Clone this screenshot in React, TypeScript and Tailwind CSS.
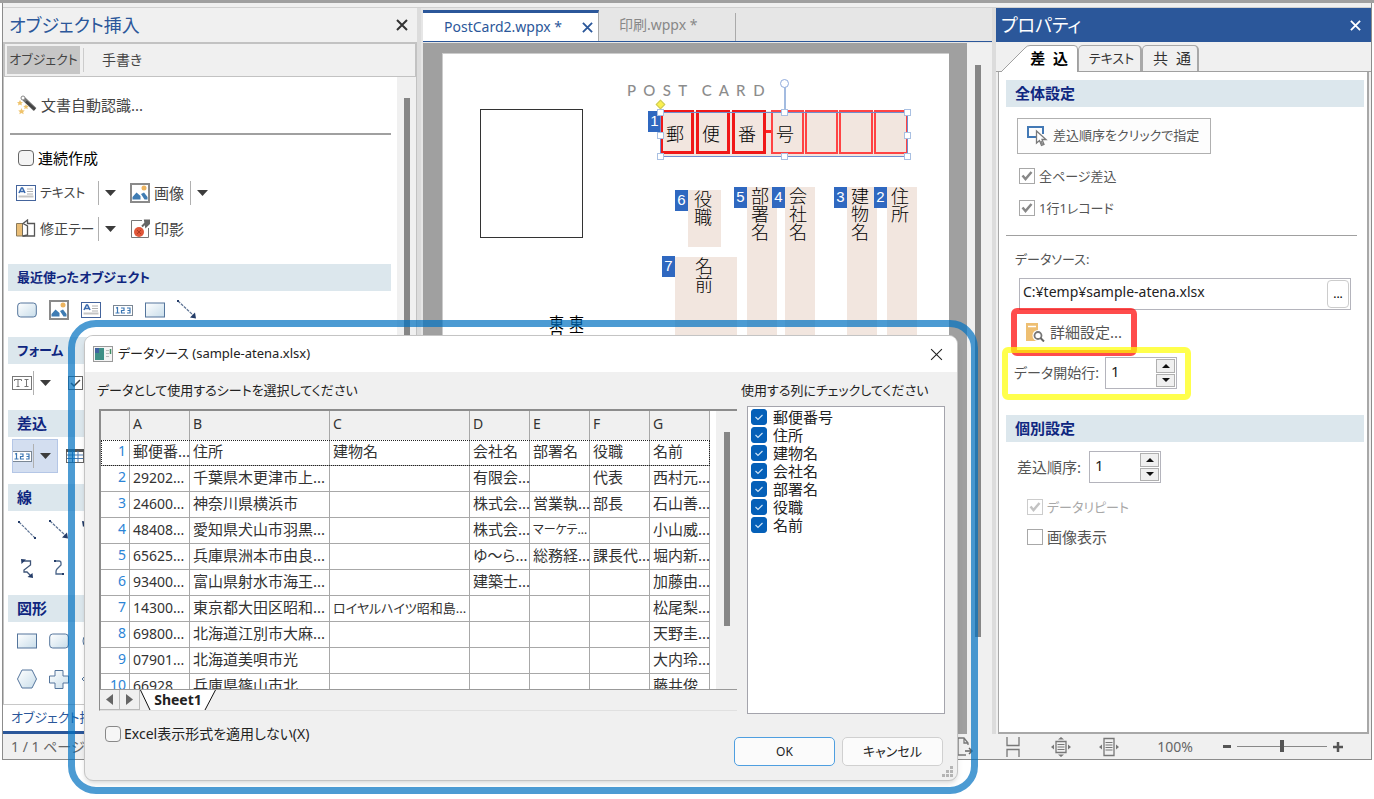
import type { ReactNode } from "react";

/* ---------- data ---------- */

const SHEET_COLUMNS = ["A", "B", "C", "D", "E", "F", "G"];

const SHEET_ROWS = [
  ["郵便番...", "住所", "建物名", "会社名", "部署名", "役職", "名前"],
  ["29202...", "千葉県木更津市上...", "", "有限会...", "", "代表", "西村元..."],
  ["24600...", "神奈川県横浜市", "", "株式会...", "営業執...", "部長", "石山善..."],
  ["48408...", "愛知県犬山市羽黒...", "", "株式会...", "マーケテ...", "", "小山威..."],
  ["65625...", "兵庫県洲本市由良...", "", "ゆ～ら...", "総務経...", "課長代...", "堀内新..."],
  ["93400...", "富山県射水市海王...", "", "建築士...", "", "", "加藤由..."],
  ["14300...", "東京都大田区昭和...", "ロイヤルハイツ昭和島...", "", "", "", "松尾梨..."],
  ["69800...", "北海道江別市大麻...", "", "", "", "", "天野圭..."],
  ["07901...", "北海道美唄市光", "", "", "", "", "大内玲..."],
  ["66928", "兵庫県篠山市北", "", "", "", "", "藤井俊"],
];

const USED_COLUMNS = ["郵便番号", "住所", "建物名", "会社名", "部署名", "役職", "名前"];

const POSTAL_BOXES = [
  { char: "郵", box: "left-[217px] w-[34px] border-[3px] border-[#f01818]" },
  { char: "便", box: "left-[253px] w-[34px] border-[3px] border-[#f01818]" },
  { char: "番", box: "left-[289px] w-[34px] border-[3px] border-[#f01818]" },
  { char: "号", box: "left-[328px] w-[33px] border-2 border-[#f44]" },
  { char: "", box: "left-[362px] w-[33px] border-2 border-[#f44]" },
  { char: "", box: "left-[396px] w-[34px] border-2 border-[#f44]" },
  { char: "", box: "left-[431px] w-[34px] border-2 border-[#f44]" },
];

// badge = number tag at the left of each merge field on the card
const MERGE_FIELDS = [
  { no: 6, text: "役職", badge: "left-[232px] top-[136px]", field: "left-[245px] top-[136px] w-[33px] h-[57px] pl-[5px]" },
  { no: 7, text: "名前", badge: "left-[219px] top-[202px]", field: "left-[232px] top-[203px] w-[62px] h-[300px] pl-[19px]" },
  { no: 5, text: "部署名", badge: "left-[291px] top-[133px]", field: "left-[304px] top-[133px] w-[30px] h-[380px] pl-[3px]" },
  { no: 4, text: "会社名", badge: "left-[329px] top-[133px]", field: "left-[342px] top-[133px] w-[30px] h-[380px] pl-[3px]" },
  { no: 3, text: "建物名", badge: "left-[391px] top-[133px]", field: "left-[404px] top-[133px] w-[30px] h-[380px] pl-[3px]" },
  { no: 2, text: "住所", badge: "left-[431px] top-[133px]", field: "left-[444px] top-[133px] w-[30px] h-[380px] pl-[3px]" },
];

const HANDLES = [
  "-left-1 -top-1",
  "left-[120px] -top-1",
  "-right-1 -top-1",
  "-left-1 top-[19px]",
  "-right-1 top-[19px]",
  "-left-1 -bottom-1",
  "left-[120px] -bottom-1",
  "-right-1 -bottom-1",
];

/* ---------- icons ---------- */

function Svg({ children, w = 20, h = 20 }: { children: ReactNode; w?: number; h?: number }) {
  return (
    <svg width={w} height={h} viewBox={`0 0 ${w} ${h}`} fill="none" className="shrink-0">
      <defs>
        <linearGradient id="shape" x1="0" y1="0" x2="1" y2="1">
          <stop offset="0" stopColor="#fff" />
          <stop offset="1" stopColor="#c8ddea" />
        </linearGradient>
      </defs>
      {children}
    </svg>
  );
}

function CloseIcon({ size = 12, width = 2 }: { size?: number; width?: number }) {
  return (
    <svg width={size} height={size} viewBox="0 0 12 12" stroke="currentColor" strokeWidth={width}>
      <path d="M1 1L11 11M11 1L1 11" />
    </svg>
  );
}

const WandIcon = () => (
  <Svg>
    <path d="M7 4L18 14.500" stroke="#777" strokeWidth="4" />
    <path d="M9 6.500L18 14.500" stroke="#444" strokeWidth="2.500" />
    <circle cx="6" cy="3" r="2" fill="#fff" stroke="#888" />
    <path d="M3 5l1 2 2 .2-1.600 1.400.5 2L3 9.500l-2 1.100.5-2L0 7.200 2 7z" fill="#efc36c" />
    <path d="M9 9l.8 1.800 2 .2-1.500 1.300.4 2L9 13.300l-1.800 1 .5-2L6.200 11l2-.2z" fill="#efc36c" />
    <path d="M4.500 13l1 2.200 2.300.2-1.700 1.500.6 2.300-2.200-1.300-2.200 1.300.6-2.300-1.700-1.500 2.300-.2z" fill="#efc36c" />
  </Svg>
);

const TextIcon = () => (
  <Svg>
    <rect x=".5" y="2.500" width="19" height="15" fill="#fff" stroke="#44649c" />
    <path d="M3 10L5.500 5h1L9 10M4 8.500h4" stroke="#3c6cb0" strokeWidth="1.600" />
    <path d="M11 6h6M11 8.500h6M11 11h6" stroke="#b0b0b0" />
    <path d="M2.500 13.500h15" stroke="#c4c4c4" strokeWidth="2" />
  </Svg>
);

const PictureIcon = () => (
  <Svg>
    <rect x="1" y="1" width="18" height="18" fill="#fff" stroke="#8a8a8a" strokeWidth="2" />
    <circle cx="14" cy="5" r="2.500" fill="#edb45f" />
    <path d="M2.500 16.500V14l4-4.500 4 3.500v3.500zM11 11l3-1.500 3.500 4.500v2.500h-3z" fill="#3f7cb3" />
  </Svg>
);

const TapeIcon = () => (
  <Svg>
    <path d="M.5 4.500H7V17H.5z" fill="#e9bd76" stroke="#8a7a5c" />
    <path d="M7 17V4.500l4.500-3.500V4.500h7V17z" fill="#fff" stroke="#555" strokeWidth="1.300" />
    <path d="M7 4.500l4.500 2.500v9l-4.500 1" fill="#fff" stroke="#555" strokeWidth="1.300" />
  </Svg>
);

const StampIcon = () => (
  <Svg>
    <path d="M12 1.500H1.500v17h17V9" stroke="#777" />
    <circle cx="9" cy="13" r="5" fill="#e0573a" />
    <path d="M7 11l4 4M11 11l-4 4" stroke="#b23a20" />
    <path d="M12 7.500l4-4M15 1.500h4v3l-3 3z" stroke="#666" strokeWidth="2" fill="#666" />
  </Svg>
);

const RoundedShape = () => (
  <Svg>
    <rect x=".7" y="3" width="18.600" height="14" rx="3" fill="url(#shape)" stroke="#54759c" />
  </Svg>
);

const RectShape = () => (
  <Svg>
    <rect x=".5" y="3" width="19" height="14" fill="url(#shape)" stroke="#54759c" />
  </Svg>
);

const NumberIcon = () => (
  <Svg>
    <rect x=".5" y="5.500" width="19" height="10" fill="#fff" stroke="#7b8794" />
    <path d="M3 8l1.500-.5v5M2.500 13h4M8 8h3v2.500H8.500V13H12M14 8h3v5h-3M14.500 10.500H17" stroke="#3b76b3" strokeWidth="1.200" />
  </Svg>
);

const ArrowLine = () => (
  <Svg>
    <path d="M1 1L16 15" stroke="#5d7394" strokeWidth="1.200" strokeDasharray="3 1" />
    <path d="M19 18.500l-6-1 5-5z" fill="#243c68" />
    <rect x="0" y="0" width="2" height="2" fill="#243c68" />
  </Svg>
);

const PlainLine = () => (
  <Svg>
    <path d="M2 2L18 18" stroke="#5d7394" strokeWidth="1.200" strokeDasharray="3 1" />
    <path d="M1 1h2v2H1zM17 17h2v2h-2z" fill="#243c68" />
  </Svg>
);

const DoubleArrowLine = () => (
  <Svg>
    <path d="M4 4L16 16" stroke="#5d7394" strokeWidth="1.200" />
    <path d="M1 1l6 1-5 5zM19 19l-6-1 5-5z" fill="#243c68" />
  </Svg>
);

const CurveArrows = () => (
  <Svg>
    <path d="M6 3H13.500V7L7 12V14H10L14 18" stroke="#3f5578" strokeWidth="1.300" />
    <path d="M4 1l5 .5L4.500 6zM16 20l-5.500-1L15.500 15z" fill="#243c68" />
  </Svg>
);

const Curve = () => (
  <Svg>
    <path d="M6 3h4q2 0 2 2v2l-4 4q-1 1-1 3v2h7" stroke="#4a6488" strokeWidth="1.300" />
    <path d="M5 2h2v2H5zM13 15h2v2h-2z" fill="#243c68" />
  </Svg>
);

const CircleShape = () => (
  <Svg>
    <circle cx="10" cy="10" r="8" fill="url(#shape)" stroke="#54759c" />
  </Svg>
);

const HexShape = () => (
  <Svg>
    <path d="M5 1h10l4.500 9L15 19H5L.5 10z" fill="url(#shape)" stroke="#54759c" />
  </Svg>
);

const CrossShape = () => (
  <Svg>
    <path d="M6 1.500h8V7h5.500v7H14v5.500H6V14H.5V7H6z" fill="url(#shape)" stroke="#54759c" />
  </Svg>
);

const DiamondShape = () => (
  <Svg>
    <path d="M10 1l9 9-9 9-9-9z" fill="url(#shape)" stroke="#54759c" />
  </Svg>
);

const TextFieldIcon = () => (
  <Svg>
    <rect x=".5" y="3.500" width="19" height="13" fill="#fff" stroke="#777" />
    <path d="M2.500 8V6.500h7V8M6 6.500V13M4.500 13.500h3M12.500 6.500h4M14.500 6.500V13M12.500 13.500h4" stroke="#777" />
  </Svg>
);

const CheckFieldIcon = () => (
  <Svg>
    <rect x="1.500" y="3.500" width="14" height="13" fill="#fff" stroke="#666" />
    <path d="M4 10l3 3 6-6" stroke="#444" strokeWidth="1.500" />
  </Svg>
);

const TableIcon = () => (
  <Svg>
    <rect x=".5" y="3.500" width="17" height="13" fill="#fff" stroke="#666" />
    <path d="M0 4.500h18" stroke="#555" strokeWidth="3" />
    <path d="M1 9h16M1 12.500h16M6.500 5v11M12 5v11" stroke="#4c7bb0" />
  </Svg>
);

const ClickOrderIcon = () => (
  <Svg w={22} h={22}>
    <path d="M10 12H2V2h15v7" stroke="#4379b5" strokeWidth="2" />
    <path d="M10.500 6v12l3-2.500 2 5 2.500-1-2-5h4z" fill="#fff" stroke="#7a7a7a" strokeWidth="1.300" />
    <path d="M15 16l1.500 4" stroke="#888" strokeWidth="2" />
  </Svg>
);

const DetailIcon = () => (
  <Svg>
    <path d="M1 1h12v18H1z" fill="#eebf72" />
    <path d="M3 4.500h8" stroke="#fff" strokeWidth="1.500" />
    <circle cx="13" cy="13.500" r="5.500" fill="#fff" />
    <circle cx="13" cy="13.500" r="3.500" stroke="#777" strokeWidth="1.800" />
    <path d="M15.500 16l3.500 3.500" stroke="#666" strokeWidth="2" />
  </Svg>
);

const Down = () => (
  <svg width="11" height="6" viewBox="0 0 11 6" className="shrink-0">
    <path d="M0 0h11L5.500 6z" fill="#3c3c3c" />
  </svg>
);

/* ---------- small controls ---------- */

function SectionTitle({ children, kana = false }: { children: ReactNode; kana?: boolean }) {
  return (
    <h3 className="flex h-[27px] items-center bg-[#dce7ed] pl-[9px] text-[15px] font-bold text-[#0f2680]">
      <span className={kana ? "text-[13px]" : undefined}>{children}</span>
    </h3>
  );
}

function SplitButton({ icon, label, small = false }: { icon: ReactNode; label: string; small?: boolean }) {
  return (
    <div className="flex h-9 w-[114px] items-center">
      <button type="button" className="flex w-[82px] items-center gap-1 whitespace-nowrap">
        {icon}
        <span className={small ? "text-[13px]" : "text-sm"}>{label}</span>
      </button>
      <span className="mr-[6px] h-6 w-px shrink-0 bg-[#b0b0b0]" />
      <button type="button" aria-label={`${label} メニュー`}>
        <Down />
      </button>
    </div>
  );
}

function GreyCheck({ label, checked = false, disabled = false }: { label: string; checked?: boolean; disabled?: boolean }) {
  return (
    <label className={disabled ? "flex items-center gap-1 text-[#a8a8a8]" : "flex items-center gap-1 text-[#555]"}>
      <span className="relative flex size-4">
        <input
          type="checkbox"
          defaultChecked={checked}
          disabled={disabled}
          className="peer size-4 appearance-none border border-[#a8a8a8] bg-white disabled:border-[#ccc]"
        />
        <svg
          viewBox="0 0 16 16"
          className="pointer-events-none absolute inset-0 hidden peer-checked:block peer-disabled:opacity-50"
        >
          <path d="M3.500 7.500l3 3.500L12.500 4" fill="none" stroke="#888" strokeWidth="2.500" />
        </svg>
      </span>
      {label}
    </label>
  );
}

function BlueCheck({ label }: { label: string }) {
  return (
    <label className="flex h-[18px] items-center gap-[6px] text-[15px] text-[#222]">
      <span className="relative flex size-4">
        <input type="checkbox" defaultChecked className="peer size-4 appearance-none rounded-[3px] border border-[#888] bg-white checked:border-[#0560b8] checked:bg-[#0560b8]" />
        <svg viewBox="0 0 16 16" className="pointer-events-none absolute inset-0 hidden peer-checked:block">
          <path d="M4.500 8l2.500 2.500 4.500-4.500" fill="none" stroke="#cfe4f7" strokeWidth="1.200" />
        </svg>
      </span>
      {label}
    </label>
  );
}

function Spin({ id }: { id: string }) {
  return (
    <div className="flex h-8 w-[72px] border border-[#b4b4bc] bg-white p-px">
      <input id={id} type="text" inputMode="numeric" defaultValue="1" className="h-6 min-w-0 flex-1 pl-1 text-[15px] text-[#222] outline-none" />
      <div className="flex w-[19px] flex-col gap-px">
        <button type="button" aria-label="増やす" className="flex flex-1 items-center justify-center border border-[#b0b0b0] bg-[#f0f0f0]">
          <svg width="8" height="4" viewBox="0 0 8 4"><path d="M0 4h8L4 0z" fill="#111" /></svg>
        </button>
        <button type="button" aria-label="減らす" className="flex flex-1 items-center justify-center border border-[#b0b0b0] bg-[#f0f0f0]">
          <svg width="8" height="4" viewBox="0 0 8 4"><path d="M0 0h8L4 4z" fill="#111" /></svg>
        </button>
      </div>
    </div>
  );
}

/* ---------- left: object panel ---------- */

function ObjectPanel() {
  return (
    <section className="flex w-[414px] shrink-0 flex-col bg-[#f0f0f0]">
      <header className="flex h-[34px] items-center justify-between pl-[6px] pr-[9px]">
        <h2 className="text-lg text-[#2b579a]">オブジェクト挿入</h2>
        <button type="button" aria-label="閉じる" className="text-[#333]">
          <CloseIcon />
        </button>
      </header>
      <nav className="flex h-[35px] items-center border-2 border-b border-[#c2c2c2] pl-[2px] text-[#444]">
        <button type="button" className="h-7 w-[73px] bg-[#c6c6c6] text-center text-[13px]">オブジェクト</button>
        <span className="ml-[3px] h-6 w-px bg-[#ccc]" />
        <button type="button" className="ml-[18px] text-sm">手書き</button>
      </nav>
      <div className="flex min-h-0 flex-1 border-x border-[#c2c2c2]">
        <div className="min-w-0 flex-1 overflow-hidden bg-white pl-1 pr-[6px] text-[#444]">
          <button type="button" className="flex h-14 items-center gap-1 pl-[9px]">
            <WandIcon />
            文書自動認識...
          </button>
          <hr className="ml-[2px] border-0 border-t-2 border-[#a0a0a0]" />
          <label className="flex h-10 items-center gap-1 pt-[6px] pl-[10px] text-black">
            <input type="checkbox" className="size-4 appearance-none rounded-[4px] border border-[#666] bg-[#f4f4f4]" />
            連続作成
          </label>
          <div className="flex pl-[8px]">
            <SplitButton icon={<TextIcon />} label="テキスト" small />
            <div className="flex items-center">
              <button type="button" className="flex items-center gap-1">
                <PictureIcon />
                画像
              </button>
              <span className="mx-[6px] h-6 w-px bg-[#b0b0b0]" />
              <button type="button" aria-label="画像 メニュー"><Down /></button>
            </div>
          </div>
          <div className="mb-[17px] flex pl-[8px]">
            <SplitButton icon={<TapeIcon />} label="修正テー" />
            <button type="button" className="flex items-center gap-1">
              <StampIcon />
              印影
            </button>
          </div>

          <SectionTitle kana>最近使ったオブジェクト</SectionTitle>
          <div className="mb-2 flex h-[38px] items-center gap-3 pl-[9px]">
            <RoundedShape />
            <PictureIcon />
            <TextIcon />
            <NumberIcon />
            <RectShape />
            <ArrowLine />
          </div>

          <SectionTitle kana>フォーム</SectionTitle>
          <div className="mb-2 flex h-[38px] items-center pl-1">
            <TextFieldIcon />
            <span className="mr-[6px] ml-px h-6 w-px bg-[#b0b0b0]" />
            <Down />
            <span className="w-4" />
            <CheckFieldIcon />
          </div>

          <SectionTitle>差込</SectionTitle>
          <div className="mb-[9px] flex h-[38px] items-center pl-1">
            <div className="flex h-[34px] w-[46px] items-center bg-[#d3def0] outline outline-1 -outline-offset-1 outline-[#b4c6e6]">
              <NumberIcon />
              <span className="mr-[6px] ml-px h-6 w-px bg-[#b0b0b0]" />
              <Down />
            </div>
            <span className="w-2" />
            <TableIcon />
          </div>

          <SectionTitle>線</SectionTitle>
          <div className="mb-2 grid grid-cols-[repeat(11,32px)] pl-[9px]">
            <span className="flex h-[38px] items-center"><PlainLine /></span>
            <span className="flex items-center"><ArrowLine /></span>
            <span className="col-span-9 flex items-center"><DoubleArrowLine /></span>
            <span className="flex h-[38px] items-center"><CurveArrows /></span>
            <span className="flex items-center"><Curve /></span>
            <span className="col-span-9 flex items-center"><CurveArrows /></span>
          </div>

          <SectionTitle>図形</SectionTitle>
          <div className="grid grid-cols-[repeat(11,32px)] pl-[9px]">
            <span className="flex h-[38px] items-center"><RectShape /></span>
            <span className="flex items-center"><RoundedShape /></span>
            <span className="col-span-9 flex items-center"><CircleShape /></span>
            <span className="flex h-[38px] items-center"><HexShape /></span>
            <span className="flex items-center"><CrossShape /></span>
            <span className="col-span-9 flex items-center"><DiamondShape /></span>
          </div>
        </div>
        <div className="w-[19px] bg-[#f0f0f0] pt-[21px]">
          <div className="ml-[7px] h-[600px] w-[6px] bg-[#868686]" />
        </div>
      </div>
      <footer className="flex h-[30px] items-center border-t border-b-[3px] border-t-[#c8c8c8] border-b-[#2b579a] bg-white pl-2">
        <button type="button" className="text-[13px] text-[#2b579a]">オブジェクト挿入</button>
      </footer>
    </section>
  );
}

/* ---------- center: document ---------- */

function PostCard() {
  return (
    <div className="relative mr-[18px] ml-[19px] min-w-0 flex-1 overflow-hidden border-t border-l border-[#ccc] bg-white">
      <div className="absolute top-[55px] left-[37px] h-[129px] w-[103px] border border-[#333]" />
      <p className="absolute top-[24px] left-[184px] font-['Lato'] text-[15px] leading-6 font-medium whitespace-pre text-[#8c8c8c]">
        {"P  O  S  T    C  A  R  D"}
      </p>

      {MERGE_FIELDS.map((f) => (
        <div key={f.no}>
          <div className={`absolute bg-[#f2e6df] text-lg text-black ${f.field}`}>
            <span className="block leading-[18px] font-light [writing-mode:vertical-rl]">{f.text}</span>
          </div>
          <span className={`absolute flex h-[21px] w-[13px] items-center justify-center bg-[#2f68c0] font-['Liberation_Sans'] text-[15px] text-white ${f.badge}`}>
            {f.no}
          </span>
        </div>
      ))}

      <div className="absolute top-[57px] left-[217px] h-[46px] w-[248px] bg-[#f2e6df]" />
      <span className="absolute top-[76px] left-[322px] h-[3px] w-[8px] bg-[#f22]" />
      {POSTAL_BOXES.map((b, i) => (
        <span key={i} className={`absolute top-[56px] flex h-[44px] items-center pt-1 pl-[3px] text-lg leading-5 font-light text-black ${b.box}`}>
          {b.char}
        </span>
      ))}
      <span className="absolute top-[57px] left-[205px] flex h-[21px] w-[13px] items-center justify-center bg-[#2f68c0] font-['Liberation_Sans'] text-[15px] text-white">
        1
      </span>

      <div className="absolute top-[58px] left-[217px] h-[45px] w-[248px] border border-[#6f8fd0]">
        <span className="absolute -top-[28px] left-[123px] h-[28px] w-[2px] bg-[#a3bbe0]" />
        <span className="absolute -top-[34px] left-[119px] size-[9px] rounded-full border border-[#8faadc] bg-white" />
        <span className="absolute -top-[12px] -left-[4px] size-[7px] rotate-45 border border-[#c9c95a] bg-[#fbf04e]" />
        {HANDLES.map((pos) => (
          <span key={pos} className={`absolute size-[7px] border border-[#a9c0e2] bg-white ${pos}`} />
        ))}
      </div>

      <p className="absolute top-[261px] left-[103px] text-[15px] leading-5 text-black [writing-mode:vertical-rl]">
        東京
        <br />
        東日
      </p>
    </div>
  );
}

function DocumentArea() {
  return (
    <section className="flex min-w-0 flex-1 flex-col border-x-4 border-[#dcdcdc] bg-[#e6e6e6] pl-[2px]">
      <nav className="flex h-[34px] items-end border-b border-[#2b579a] pt-[2px] text-sm">
        <div className="flex h-[31px] w-[176px] items-center justify-between border-t-[3px] border-r border-t-[#2b579a] border-r-[#aaa] bg-white pr-[5px] pl-[21px] text-[#2b579a]">
          <button type="button">PostCard2.wppx *</button>
          <button type="button" aria-label="PostCard2を閉じる"><CloseIcon size={11} /></button>
        </div>
        <button type="button" className="h-7 w-[137px] border-r border-[#aaa] pb-1 pl-5 text-left text-[#888]">印刷.wppx *</button>
      </nav>
      <div className="mt-px flex min-h-0 flex-1 bg-[#a0a0a0]">
        <div className="flex min-w-0 flex-1 pt-[10px]">
          <PostCard />
        </div>
        <div className="w-[25px] bg-[#f0f0f0] pt-[22px]">
          <div className="ml-2 h-[572px] w-[6px] bg-[#868686]" />
        </div>
      </div>
    </section>
  );
}

/* ---------- right: properties ---------- */

function PropertyPanel() {
  return (
    <section className="flex w-[375px] shrink-0 flex-col bg-[#f0f0f0]">
      <header className="flex h-[34px] items-center justify-between bg-[#2b579a] pr-[10px] pl-[5px] text-white">
        <h2 className="text-lg">プロパティ</h2>
        <button type="button" aria-label="閉じる">
          <CloseIcon size={11} />
        </button>
      </header>
      <div role="tablist" className="flex h-[30px] items-end border-b border-[#a0a0a0] pl-[5px]">
        <button type="button" role="tab" className="relative -mb-px flex h-[27px] w-[77px] items-center justify-end pr-[10px] text-[15px] font-bold text-black">
          <svg viewBox="0 0 77 27" className="absolute inset-0">
            <path d="M0 27L24 3Q26 .5 29 .5H73Q76.500 .5 76.500 4V27" fill="#fff" stroke="#a0a0a0" />
          </svg>
          <span className="relative">差&nbsp; 込</span>
        </button>
        <button type="button" role="tab" className="h-[26px] w-[64px] rounded-t-[5px] border border-r-2 border-b-0 border-[#a8a8a8] pl-1 text-center text-[13px] text-[#333]">
          テキスト
        </button>
        <button type="button" role="tab" className="h-[26px] w-[57px] rounded-t-[5px] border border-r-2 border-b-0 border-[#a8a8a8] pl-1 text-center text-[15px] text-[#333]">
          共&nbsp; 通
        </button>
      </div>
      <div className="mx-[2px] flex-1 border-r-2 border-b-2 border-l border-[#a8a8a8] bg-white pt-2 pr-[3px] pl-[7px] text-[#555]">
        <SectionTitle>全体設定</SectionTitle>
        <div className="mr-[7px] border-b border-[#a0a0a0] pt-[11px] pb-[19px] pl-[11px]">
          <button type="button" className="flex h-9 w-[194px] items-center gap-[5px] border border-[#b0b0b0] bg-[#fdfdfd] pl-2 text-[13px] whitespace-nowrap">
            <ClickOrderIcon />
            差込順序をクリックで指定
          </button>
          <div className="mt-[14px] flex flex-col gap-4 pl-[2px] text-[13px] leading-4">
            <GreyCheck label="全ページ差込" checked />
            <GreyCheck label="1行1レコード" checked />
          </div>
        </div>

        <label htmlFor="source" className="mt-[13px] block pl-[9px] text-[13px] leading-5">データソース:</label>
        <div className="mt-[9px] mr-[13px] ml-[13px] flex h-8 items-center border border-[#b4b4bc] bg-white pr-px">
          <input id="source" type="text" defaultValue="C:¥temp¥sample-atena.xlsx" className="min-w-0 flex-1 pb-1 pl-[3px] text-sm text-[#222] outline-none" />
          <button type="button" aria-label="参照" className="h-7 w-[22px] rounded border border-[#ccc] text-xs text-black">...</button>
        </div>
        <div className="relative mt-1 ml-[19px] w-[104px]">
          <button type="button" className="flex h-9 items-center gap-[5px]">
            <DetailIcon />
            詳細設定...
          </button>
          <span className="pointer-events-none absolute -top-[6px] -left-[14px] h-[48px] w-[126px] rounded-md border-[6px] border-[#ff0000]/70" />
        </div>
        <div className="relative mt-[7px] flex items-center gap-[6px] pl-[8px] text-sm">
          <label htmlFor="start-row" className="w-[85px] whitespace-nowrap">データ開始行:</label>
          <Spin id="start-row" />
          <span className="pointer-events-none absolute -top-[10px] -left-[4px] h-[53px] w-[189px] rounded-md border-[6px] border-[#ffff00]/70" />
        </div>

        <div className="mt-[26px]">
          <SectionTitle>個別設定</SectionTitle>
        </div>
        <div className="mt-[9px] flex items-center gap-2 pl-[11px] text-[15px]">
          <label htmlFor="order">差込順序:</label>
          <Spin id="order" />
        </div>
        <div className="mt-[16px] flex flex-col gap-[14px] pl-[21px] leading-4">
          <div className="text-[13px]">
            <GreyCheck label="データリピート" checked disabled />
          </div>
          <GreyCheck label="画像表示" />
        </div>
      </div>
    </section>
  );
}

/* ---------- status bar ---------- */

function StatusBar() {
  return (
    <footer className="flex h-[25px] items-center justify-between bg-[#f0f0f0] pr-[28px] pl-2 text-sm text-[#666]">
      <span>1 / 1 ページ</span>
      <div className="flex items-center">
        <Svg w={18} h={20}>
          <path d="M12 8V6L8 1H2v17h8M8 1v5h4" stroke="#777" strokeWidth="1.300" />
          <path d="M9 14h7M13 11l3 3-3 3" stroke="#666" strokeWidth="1.500" />
        </Svg>
        <span className="w-[30px]" />
        <Svg w={18} h={20}>
          <path d="M3 0v8.500h12V0M3 20v-7.500h12V20" stroke="#777" strokeWidth="1.300" />
        </Svg>
        <span className="w-[29px]" />
        <Svg w={20} h={20}>
          <path d="M5 4.500h10v11H5z" stroke="#777" strokeWidth="1.300" />
          <path d="M6.500 7.500h7M6.500 10h7M6.500 12.500h7" stroke="#777" />
          <path d="M10 0l3 2.500H7zM10 20l3-2.500H7zM0 10l3-2.500v5zM20 10l-3-2.500v5z" fill="#777" />
        </Svg>
        <span className="w-7" />
        <Svg w={20} h={20}>
          <path d="M5 1.500h10v17H5z" stroke="#777" strokeWidth="1.300" />
          <path d="M6.500 5.500h7M6.500 8h7M6.500 10.500h7M6.500 13h7" stroke="#777" />
          <path d="M0 10l3-2.500v5zM20 10l-3-2.500v5z" fill="#777" />
        </Svg>
        <span className="w-[74px] text-right">100%</span>
        <button type="button" aria-label="縮小" className="ml-[30px] h-[3px] w-2 bg-[#555]" />
        <input
          type="range"
          aria-label="ズーム"
          className="mx-[6px] h-3 w-[90px] appearance-none bg-transparent [&::-webkit-slider-runnable-track]:h-px [&::-webkit-slider-runnable-track]:bg-[#888] [&::-webkit-slider-thumb]:-mt-[6px] [&::-webkit-slider-thumb]:h-3 [&::-webkit-slider-thumb]:w-1 [&::-webkit-slider-thumb]:appearance-none [&::-webkit-slider-thumb]:bg-[#555]"
        />
        <button type="button" aria-label="拡大">
          <svg width="10" height="10" viewBox="0 0 10 10" stroke="#555" strokeWidth="2.500">
            <path d="M5 0v10M0 5h10" />
          </svg>
        </button>
      </div>
    </footer>
  );
}

/* ---------- data source dialog ---------- */

function cellSize(text: string) {
  if (/^\d/.test(text)) return "text-sm leading-5";
  if (/^[ァ-ヶー]{5}/.test(text)) return "text-[13px] leading-5";
  if (/^[ァ-ヶー]{3}/.test(text)) return "text-xs leading-5";
  return undefined;
}

function SheetTable() {
  return (
    <div className="flex h-[281px] overflow-hidden border-t-2 border-l-2 border-b border-t-[#8c8c8c] border-l-[#8c8c8c] border-b-[#999] bg-white">
      <table className="h-fit w-[609px] shrink-0 table-fixed border-separate border-spacing-0 text-[15px] leading-5 text-[#333]">
        <colgroup>
          <col className="w-[29px]" />
          <col className="w-[60px]" />
          <col className="w-[140px]" />
          <col className="w-[140px]" />
          <col className="w-[60px]" />
          <col className="w-[60px]" />
          <col className="w-[60px]" />
          <col className="w-[60px]" />
        </colgroup>
        <thead>
          <tr className="h-[29px] bg-[#f0f0f0]">
            <th className="border-r border-[#a8a8a8]" />
            {SHEET_COLUMNS.map((c) => (
              <th key={c} className="border-r border-[#a8a8a8] pb-[3px] pl-[3px] text-left text-sm font-normal">{c}</th>
            ))}
          </tr>
        </thead>
        <tbody>
          {SHEET_ROWS.map((row, r) => (
            <tr key={r} className="h-[26px] first:outline-1 first:-outline-offset-1 first:outline-dotted first:outline-[#222]">
              <td className="border-r border-b border-[#a8a8a8] pr-[3px] pb-[3px] text-right text-sm text-[#2b84d6]">{r + 1}</td>
              {row.map((cell, c) => (
                <td key={c} className="border-r border-b border-[#a8a8a8] pb-[3px] pl-[3px] whitespace-nowrap">
                  <span className={cellSize(cell)}>{cell}</span>
                </td>
              ))}
            </tr>
          ))}
        </tbody>
      </table>
      <div className="flex flex-1 bg-white">
        <div className="ml-[6px] flex-1 bg-[#f0f0f0] pt-[21px]">
          <div className="ml-2 h-[194px] w-[6px] bg-[#868686]" />
        </div>
      </div>
    </div>
  );
}

function DataSourceDialog() {
  return (
    <div role="dialog" aria-labelledby="dialog-title" className="absolute top-[335px] left-[84px] flex h-[446px] w-[874px] flex-col overflow-hidden rounded-[9px] border border-[#c4c4c4] bg-[#f0f0f0] text-[#222] shadow-md">
      <header className="flex h-9 shrink-0 items-center bg-white pr-[14px] pl-2">
        <Svg w={20} h={16}>
          <rect x=".5" y=".5" width="19" height="15" fill="#f4f4f4" stroke="#999" />
          <rect x="2" y="2" width="9" height="12" fill="#3e8f86" />
          <path d="M2 2h4v5H2z" fill="#3f62a0" />
          <path d="M13 4.500h3M13 7.500h3M13 10.500h3" stroke="#bbb" />
          <path d="M17.500 3v5" stroke="#3d8c62" strokeWidth="1.500" />
        </Svg>
        <h2 id="dialog-title" className="ml-[5px] flex-1 text-[13px]">データソース (sample-atena.xlsx)</h2>
        <button type="button" aria-label="閉じる"><CloseIcon size={13} width={1} /></button>
      </header>

      <div className="flex pt-2 pr-3 pl-[14px]">
        <div className="min-w-0 flex-1">
          <p className="-ml-[2px] pb-[9px] text-[13px] leading-5">データとして使用するシートを選択してください</p>
          <SheetTable />
          <div className="flex h-[21px] items-stretch border-l border-b border-l-[#8c8c8c] border-b-[#e0e0e0]">
            <button type="button" aria-label="前のシート" className="flex w-[20px] items-center justify-center border-r border-b border-[#bbb]">
              <svg width="7" height="11" viewBox="0 0 7 11"><path d="M7 0v11L0 5.500z" fill="#666" /></svg>
            </button>
            <button type="button" aria-label="次のシート" className="flex w-[20px] items-center justify-center border-r border-b border-[#bbb]">
              <svg width="7" height="11" viewBox="0 0 7 11"><path d="M0 0v11l7-5.500z" fill="#666" /></svg>
            </button>
            <button type="button" className="relative w-[76px] text-sm leading-[18px] font-bold">
              <svg viewBox="0 0 76 21" className="absolute inset-0">
                <path d="M0 -1L10 20H65L76 -1z" fill="#fff" />
                <path d="M0 -1L10 20M65 20L76 -1" stroke="#111" />
              </svg>
              <span className="relative">Sheet1</span>
            </button>
          </div>
        </div>
        <div className="ml-[10px] w-[198px]">
          <p className="-ml-[6px] pb-[6px] text-[13px] leading-5 whitespace-nowrap">使用する列にチェックしてください</p>
          <div className="h-[308px] border border-[#a4a4ac] bg-white pt-px pl-[3px]">
            {USED_COLUMNS.map((c) => (
              <BlueCheck key={c} label={c} />
            ))}
          </div>
        </div>
      </div>

      <div className="flex flex-1 items-start pr-[14px] pl-5">
        <label className="mt-[10px] flex flex-1 items-center gap-[3px] text-sm leading-5">
          <input type="checkbox" className="size-4 appearance-none rounded-[4px] border border-[#888] bg-[#f6f6f6]" />
          Excel表示形式を適用しない(X)
        </label>
        <div className="mt-[23px] flex gap-[7px] text-[13px]">
          <button type="button" className="h-[29px] w-[101px] rounded-[5px] border border-[#4f9fe0] bg-[#fbfbfb] text-xs">OK</button>
          <button type="button" className="h-[29px] w-[101px] rounded-[5px] border border-[#d0d0d0] bg-[#fbfbfb]">キャンセル</button>
        </div>
      </div>
      <svg width="12" height="12" viewBox="0 0 12 12" fill="#b4b4b4" className="absolute right-[3px] bottom-[2px]">
        <path d="M8 0h3v3H8zM4 4h3v3H4zM8 4h3v3H8zM0 8h3v3H0zM4 8h3v3H4zM8 8h3v3H8z" />
      </svg>
    </div>
  );
}

export default function App() {
  return (
    <div className="relative flex h-screen min-h-[799px] flex-col overflow-hidden bg-white pb-[39px] font-['Noto_Sans','Noto_Sans_CJK_JP',sans-serif] text-[15px] [font-feature-settings:'palt']">
      <div className="h-[3px] shrink-0 bg-[#a0a0a0]" />
      <main className="mr-[2px] ml-[2px] flex min-h-0 flex-1 flex-col border-x border-b border-[#8c8c8c] bg-[#f0f0f0]">
        <div className="h-[5px] shrink-0 border-b border-[#d0d0d0]" />
        <div className="flex min-h-0 flex-1">
          <ObjectPanel />
          <DocumentArea />
          <PropertyPanel />
        </div>
        <StatusBar />
      </main>
      <DataSourceDialog />
      <div className="pointer-events-none absolute top-[320px] left-[68px] h-[474px] w-[910px] rounded-[28px] border-[7px] border-[#0070c0]/70" />
    </div>
  );
}
